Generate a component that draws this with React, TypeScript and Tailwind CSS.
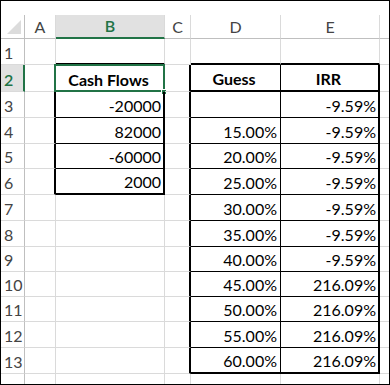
import React from "react";

const GRID = "border-[#dadada]";
const HDR = "border-[#bfbfbf]";

const rowHeights = [
  "h-[26px]",
  "h-[27px]",
  "h-[26px]",
  "h-[26px]",
  "h-[25px]",
  "h-[26px]",
  "h-[26px]",
  "h-[26px]",
  "h-[25px]",
  "h-[25px]",
  "h-[25px]",
  "h-[26px]",
  "h-[26px]",
];

const colW = {
  h: "w-[24px]",
  A: "w-[31px]",
  B: "w-[109px]",
  C: "w-[26px]",
  D: "w-[90px]",
  E: "w-[99px]",
  F: "w-[9px]",
};

const bVals: Record<number, string> = { 2: "Cash Flows", 3: "-20000", 4: "82000", 5: "-60000", 6: "2000" };
const dVals: Record<number, string> = {
  2: "Guess",
  4: "15.00%",
  5: "20.00%",
  6: "25.00%",
  7: "30.00%",
  8: "35.00%",
  9: "40.00%",
  10: "45.00%",
  11: "50.00%",
  12: "55.00%",
  13: "60.00%",
};
const eVals: Record<number, string> = {
  2: "IRR",
  3: "-9.59%",
  4: "-9.59%",
  5: "-9.59%",
  6: "-9.59%",
  7: "-9.59%",
  8: "-9.59%",
  9: "-9.59%",
  10: "216.09%",
  11: "216.09%",
  12: "216.09%",
  13: "216.09%",
};

function rightCls(col: string, r: number): string {
  if (col === "A" || col === "B") {
    if (r >= 2 && r <= 6) return "border-r-2 border-r-black";
    return "border-r border-r-[#dadada]";
  }
  if (col === "C" || col === "E") {
    if (r >= 2) return "border-r-2 border-r-black";
    return "border-r border-r-[#dadada]";
  }
  if (col === "D") {
    if (r >= 2) return "border-r border-r-black";
    return "border-r border-r-[#dadada]";
  }
  return "";
}

function bottomCls(col: string, r: number): string {
  if (col === "B") {
    if (r === 1 || r === 6) return "border-b-2 border-b-black";
    if (r >= 2 && r <= 5) return "border-b border-b-black";
    return "border-b border-b-[#dadada]";
  }
  if (col === "D" || col === "E") {
    if (r === 1 || r === 2 || r === 13) return "border-b-2 border-b-black";
    return "border-b border-b-black";
  }
  return "border-b border-b-[#dadada]";
}

function Cell({ col, r, text, bold, align }: { col: keyof typeof colW; r: number; text?: string; bold?: boolean; align?: "center" | "right" }) {
  const justify = align === "center" ? "justify-center" : "justify-end";
  const pr = col === "D" ? "pr-[3px]" : "pr-[2px]";
  return (
    <div
      className={`relative box-border flex shrink-0 items-end pb-[3px] ${justify} ${pr} ${colW[col]} ${rightCls(col, r)} ${bottomCls(col, r)} ${bold ? "font-bold" : ""}`}
    >
      {text ? <span className="leading-none">{text}</span> : null}
      {col === "B" && r === 2 ? (
        <>
          <div className="absolute -left-[2px] -top-[1px] h-[28px] w-[111px] border-2 border-[#217346]" />
          <div className="absolute left-[105px] top-[24px] h-[6px] w-[6px] border border-white bg-[#217346]" />
        </>
      ) : null}
    </div>
  );
}

export default function App() {
  const rows = Array.from({ length: 13 }, (_, i) => i + 1);
  return (
    <div
      className="box-border h-[385px] w-[390px] overflow-hidden border border-black bg-white text-[16px] text-black"
      style={{ fontFamily: "Lato, 'Open Sans', sans-serif" }}
    >
      {/* top blank strip */}
      <div className="h-[14px]" />
      {/* column header row */}
      <div className="flex h-[24px] text-[#444]">
        <div className={`relative box-border w-[24px] shrink-0 border-r border-b ${HDR}`}>
          <svg className="absolute left-[6px] top-[5px]" width="14" height="14" viewBox="0 0 14 14">
            <polygon points="14,0 14,14 0,14" fill="#dcdcdc" />
          </svg>
        </div>
        <div className={`box-border flex w-[31px] shrink-0 items-center justify-center border-r border-b border-r-[#dadada] border-b-[#bfbfbf]`}>A</div>
        <div className="box-border flex w-[109px] shrink-0 items-center justify-center border-r border-b-2 border-r-[#dadada] border-b-[#217346] bg-[#e1e1e1] font-semibold text-[#217346]">
          B
        </div>
        <div className="box-border flex w-[26px] shrink-0 items-center justify-center border-r border-b border-r-[#dadada] border-b-[#bfbfbf]">C</div>
        <div className="box-border flex w-[90px] shrink-0 items-center justify-center border-r border-b border-r-[#dadada] border-b-[#bfbfbf]">D</div>
        <div className="box-border flex w-[99px] shrink-0 items-center justify-center border-r border-b border-r-[#dadada] border-b-[#bfbfbf]">E</div>
        <div className="box-border w-[9px] shrink-0 border-b border-b-[#bfbfbf]" />
      </div>
      {rows.map((r) => (
        <div key={r} className={`flex ${rowHeights[r - 1]}`}>
          <div
            className={`box-border flex w-[24px] shrink-0 items-end pb-[3px] pl-[3px] border-b border-b-[#dadada] ${
              r === 2 ? "border-r-2 border-r-[#217346] bg-[#e1e1e1] font-semibold text-[#217346]" : "border-r border-r-[#bfbfbf] text-[#444]"
            }`}
          >
            <span className="leading-none">{r}</span>
          </div>
          <Cell col="A" r={r} />
          <Cell col="B" r={r} text={bVals[r]} bold={r === 2} align={r === 2 ? "center" : "right"} />
          <Cell col="C" r={r} />
          <Cell col="D" r={r} text={dVals[r]} bold={r === 2} align={r === 2 ? "center" : "right"} />
          <Cell col="E" r={r} text={eVals[r]} bold={r === 2} align={r === 2 ? "center" : "right"} />
          <Cell col="F" r={r} />
        </div>
      ))}
      {/* bottom strip */}
      <div className="flex h-[10px]">
        <div className={`box-border w-[24px] shrink-0 border-r ${HDR}`} />
        <div className={`box-border w-[31px] shrink-0 border-r ${GRID}`} />
        <div className={`box-border w-[109px] shrink-0 border-r ${GRID}`} />
        <div className={`box-border w-[26px] shrink-0 border-r ${GRID}`} />
        <div className={`box-border w-[90px] shrink-0 border-r ${GRID}`} />
        <div className={`box-border w-[99px] shrink-0 border-r ${GRID}`} />
        <div className="w-[9px] shrink-0" />
      </div>
    </div>
  );
}
